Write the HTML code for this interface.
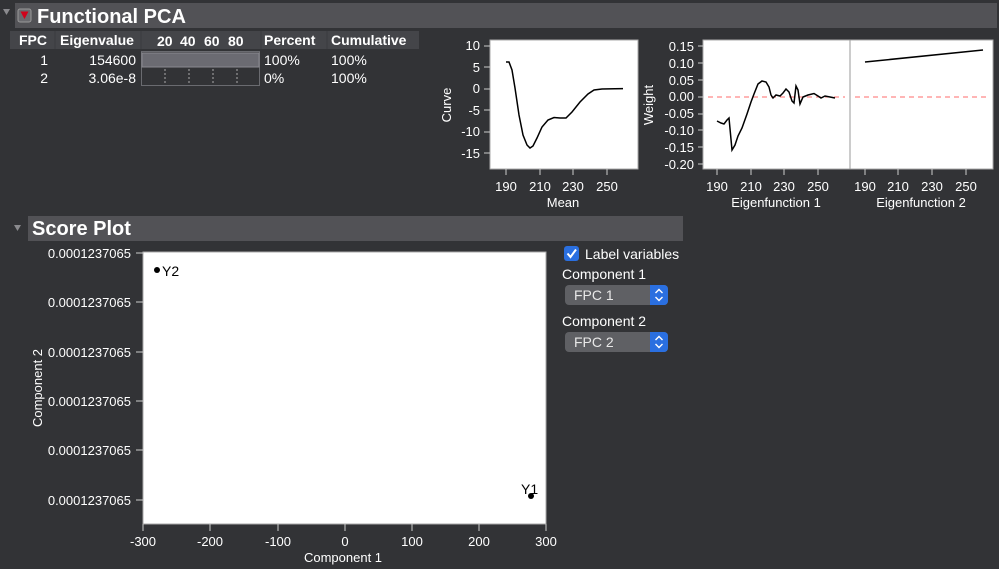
<!DOCTYPE html>
<html><head><meta charset="utf-8"><style>
html,body{margin:0;padding:0;background:#323336;width:999px;height:569px;overflow:hidden;font-family:"Liberation Sans",Arial,sans-serif;}
svg{position:absolute;left:0;top:0}
</style></head><body>
<svg width="999" height="569" viewBox="0 0 999 569" font-family="Liberation Sans, Arial, sans-serif">
<!-- header -->
<polygon points="3,9 10,9 6.5,15" fill="#8a8a8e"/>
<rect x="15" y="3" width="982" height="25" fill="#525256"/>
<rect x="18" y="9" width="13" height="13" rx="2" fill="#6a6a6e" stroke="#999" stroke-width="1"/>
<polygon points="20.5,11.5 28.5,11.5 24.5,19" fill="#d0021b"/>
<text x="37" y="23" font-size="20" font-weight="bold" fill="#fff">Functional PCA</text>
<!-- table -->
<rect x="10" y="31" width="409" height="18" fill="#444549"/>
<g font-size="14" font-weight="bold" fill="#fff">
<text x="19" y="45">FPC</text><text x="60" y="45">Eigenvalue</text>
<text x="157" y="46">20</text><text x="180" y="46">40</text><text x="204" y="46">60</text><text x="228" y="46">80</text>
<text x="264" y="45">Percent</text><text x="331" y="45">Cumulative</text></g>
<g stroke="#3a3b3e" stroke-width="1"><line x1="55" y1="31" x2="55" y2="49"/><line x1="141" y1="31" x2="141" y2="49"/><line x1="261" y1="31" x2="261" y2="49"/><line x1="327" y1="31" x2="327" y2="49"/></g>
<rect x="141.5" y="51.5" width="118" height="34" fill="none" stroke="#6a6b70"/>
<rect x="142" y="53" width="117" height="14" fill="#6b6b72" stroke="#8a8a90"/>
<g stroke="#aaa" stroke-dasharray="2,2"><line x1="165" y1="69" x2="165" y2="85"/><line x1="189" y1="69" x2="189" y2="85"/><line x1="213" y1="69" x2="213" y2="85"/><line x1="237" y1="69" x2="237" y2="85"/></g>
<g font-size="14" fill="#fff">
<text x="48" y="65" text-anchor="end">1</text><text x="136" y="65" text-anchor="end">154600</text><text x="264" y="65">100%</text><text x="331" y="65">100%</text>
<text x="48" y="83" text-anchor="end">2</text><text x="136" y="83" text-anchor="end">3.06e-8</text><text x="264" y="83">0%</text><text x="331" y="83">100%</text></g>
<!-- curve plot -->
<rect x="490" y="40" width="148" height="129" fill="#fff" stroke="#aaa"/>
<g font-size="13" fill="#fff" text-anchor="end">
<text x="480" y="50">10</text><text x="480" y="72">5</text><text x="480" y="93">0</text><text x="480" y="115">-5</text><text x="480" y="136">-10</text><text x="480" y="158">-15</text></g>
<g stroke="#ccc"><line x1="484" y1="46" x2="490" y2="46"/><line x1="484" y1="67" x2="490" y2="67"/><line x1="484" y1="89" x2="490" y2="89"/><line x1="484" y1="110" x2="490" y2="110"/><line x1="484" y1="132" x2="490" y2="132"/><line x1="484" y1="153" x2="490" y2="153"/>
<line x1="506" y1="169" x2="506" y2="175"/><line x1="540" y1="169" x2="540" y2="175"/><line x1="573" y1="169" x2="573" y2="175"/><line x1="607" y1="169" x2="607" y2="175"/></g>
<g font-size="13" fill="#fff" text-anchor="middle"><text x="506" y="191">190</text><text x="540" y="191">210</text><text x="573" y="191">230</text><text x="607" y="191">250</text><text x="563" y="207">Mean</text></g>
<text transform="translate(451,105) rotate(-90)" font-size="13" fill="#fff" text-anchor="middle">Curve</text>
<path d="M506,62 L509,62 L512,70 L515,88 L519,115 L523,135 L527,145 L530,148 L533,146 L537,138 L542,127 L548,120 L554,117.5 L560,118 L566,118 L572,112 L580,102 L588,94 L594,90 L602,89 L615,88.7 L623,88.6" fill="none" stroke="#000" stroke-width="1.5"/>
<!-- eigen plot -->
<rect x="703" y="40" width="290" height="129" fill="#fff" stroke="#aaa"/>
<line x1="850" y1="40" x2="850" y2="169" stroke="#999"/>
<g font-size="13" fill="#fff" text-anchor="end">
<text x="694" y="51">0.15</text><text x="694" y="68">0.10</text><text x="694" y="85">0.05</text><text x="694" y="101">0.00</text><text x="694" y="118">-0.05</text><text x="694" y="135">-0.10</text><text x="694" y="152">-0.15</text><text x="694" y="169">-0.20</text></g>
<g stroke="#ccc"><line x1="698" y1="46" x2="703" y2="46"/><line x1="698" y1="63" x2="703" y2="63"/><line x1="698" y1="80" x2="703" y2="80"/><line x1="698" y1="97" x2="703" y2="97"/><line x1="698" y1="114" x2="703" y2="114"/><line x1="698" y1="130" x2="703" y2="130"/><line x1="698" y1="147" x2="703" y2="147"/><line x1="698" y1="164" x2="703" y2="164"/>
<line x1="717" y1="169" x2="717" y2="175"/><line x1="751" y1="169" x2="751" y2="175"/><line x1="784" y1="169" x2="784" y2="175"/><line x1="818" y1="169" x2="818" y2="175"/>
<line x1="865" y1="169" x2="865" y2="175"/><line x1="898" y1="169" x2="898" y2="175"/><line x1="932" y1="169" x2="932" y2="175"/><line x1="966" y1="169" x2="966" y2="175"/></g>
<text transform="translate(653,105) rotate(-90)" font-size="13" fill="#fff" text-anchor="middle">Weight</text>
<g stroke="#ff6b6b" stroke-dasharray="5,4"><line x1="708" y1="97" x2="845" y2="97"/><line x1="855" y1="97" x2="990" y2="97"/></g>
<path d="M717,121 L721,123 L724,124 L727,120 L729,118 L732,150 L735,145 L738,136 L742,128 L747,114 L751,102 L754,94 L758,84 L762,81 L766,82 L769,87 L771,95 L773,98 L776,95 L780,96 L783,93 L786,89 L789,92 L792,101 L794,103 L796,86 L798,90 L800,104 L803,97 L808,95 L814,93.5 L818,96 L821,98 L825,96 L830,97 L835,98" fill="none" stroke="#000" stroke-width="1.5"/>
<line x1="865" y1="62" x2="983" y2="50" stroke="#000" stroke-width="1.5"/>
<g font-size="13" fill="#fff" text-anchor="middle"><text x="717" y="191">190</text><text x="751" y="191">210</text><text x="784" y="191">230</text><text x="818" y="191">250</text><text x="776" y="207">Eigenfunction 1</text>
<text x="865" y="191">190</text><text x="898" y="191">210</text><text x="932" y="191">230</text><text x="966" y="191">250</text><text x="921" y="207">Eigenfunction 2</text></g>
<!-- Score plot -->
<polygon points="14,225 21,225 17.5,231" fill="#8a8a8e"/>
<rect x="28" y="216" width="655" height="25" fill="#525256"/>
<text x="32" y="235" font-size="20" font-weight="bold" fill="#fff">Score Plot</text>
<rect x="143" y="252" width="403" height="272" fill="#fff" stroke="#aaa"/>
<g font-size="13" fill="#fff" text-anchor="end">
<text x="131" y="258">0.0001237065</text><text x="131" y="307">0.0001237065</text><text x="131" y="357">0.0001237065</text><text x="131" y="406">0.0001237065</text><text x="131" y="455">0.0001237065</text><text x="131" y="505">0.0001237065</text></g>
<g stroke="#ccc"><line x1="136" y1="253" x2="143" y2="253"/><line x1="136" y1="302" x2="143" y2="302"/><line x1="136" y1="352" x2="143" y2="352"/><line x1="136" y1="401" x2="143" y2="401"/><line x1="136" y1="450" x2="143" y2="450"/><line x1="136" y1="500" x2="143" y2="500"/>
<line x1="143" y1="524" x2="143" y2="531"/><line x1="210" y1="524" x2="210" y2="531"/><line x1="278" y1="524" x2="278" y2="531"/><line x1="345" y1="524" x2="345" y2="531"/><line x1="412" y1="524" x2="412" y2="531"/><line x1="479" y1="524" x2="479" y2="531"/><line x1="546" y1="524" x2="546" y2="531"/></g>
<g font-size="13" fill="#fff" text-anchor="middle"><text x="143" y="546">-300</text><text x="210" y="546">-200</text><text x="278" y="546">-100</text><text x="345" y="546">0</text><text x="412" y="546">100</text><text x="479" y="546">200</text><text x="546" y="546">300</text><text x="343" y="562">Component 1</text></g>
<text transform="translate(42,388) rotate(-90)" font-size="13" fill="#fff" text-anchor="middle">Component 2</text>
<circle cx="157" cy="270" r="3" fill="#000"/><text x="162" y="276" font-size="14">Y2</text>
<circle cx="531" cy="496" r="3" fill="#000"/><text x="521" y="494" font-size="14">Y1</text>
<!-- controls -->
<rect x="564" y="246" width="15" height="15" rx="3" fill="#2a6fe0"/>
<path d="M567.5,253.5 L570.5,257 L576,249.5" fill="none" stroke="#fff" stroke-width="2"/>
<text x="585" y="259" font-size="14" fill="#fff">Label variables</text>
<text x="562" y="279" font-size="14" fill="#fff">Component 1</text>
<rect x="565" y="285" width="103" height="20" rx="4" fill="#5f6064"/>
<rect x="650" y="285" width="18" height="20" rx="4" fill="#2a6fe0"/><rect x="650" y="285" width="6" height="20" fill="#2a6fe0"/>
<path d="M655.5,293 L659,289.5 L662.5,293 M655.5,297 L659,300.5 L662.5,297" fill="none" stroke="#fff" stroke-width="1.4"/>
<text x="574" y="300" font-size="14" fill="#e8e8e8">FPC 1</text>
<text x="562" y="326" font-size="14" fill="#fff">Component 2</text>
<rect x="565" y="332" width="103" height="20" rx="4" fill="#5f6064"/>
<rect x="650" y="332" width="18" height="20" rx="4" fill="#2a6fe0"/><rect x="650" y="332" width="6" height="20" fill="#2a6fe0"/>
<path d="M655.5,340 L659,336.5 L662.5,340 M655.5,344 L659,347.5 L662.5,344" fill="none" stroke="#fff" stroke-width="1.4"/>
<text x="574" y="347" font-size="14" fill="#e8e8e8">FPC 2</text>
</svg>
</body></html>
